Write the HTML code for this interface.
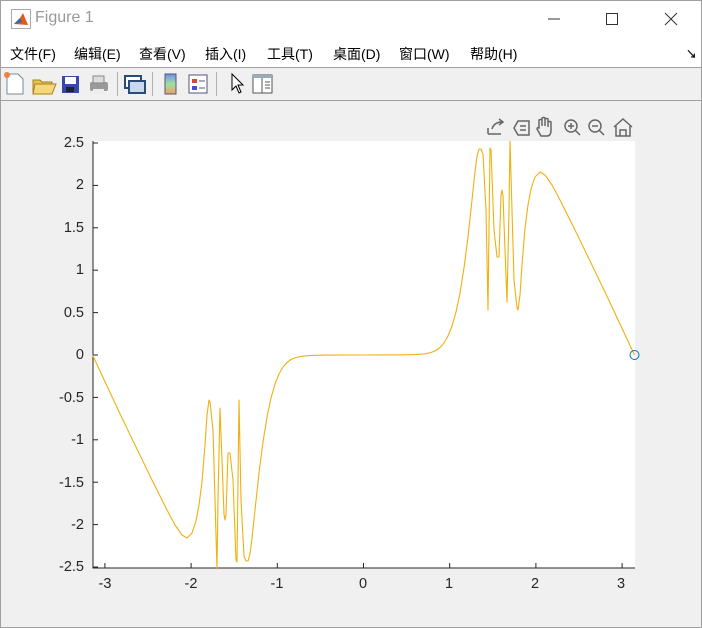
<!DOCTYPE html>
<html><head><meta charset="utf-8"><style>
body{margin:0;width:702px;height:628px;background:#f0f0f0;font-family:"Liberation Sans","Noto Sans CJK SC",sans-serif;overflow:hidden;position:relative}
.top{position:absolute;left:0;top:0;width:702px;height:67px;background:#fff;border-bottom:1px solid #a0a0a0}
.title{position:absolute;left:35px;top:9px;font-size:16px;color:#999}
.menu{position:absolute;top:44px;font-size:14px;color:#000}
.tb{position:absolute;top:100px;left:0;width:702px;height:1px;background:#a0a0a0}
.sep{position:absolute;top:72px;width:1px;height:24px;background:#b0b0b0}
.win{position:absolute;left:0;top:0;width:700px;height:626px;border:1px solid #a0a0a0;pointer-events:none}
.yl{position:absolute;right:618px;font-size:14.5px;color:#262626;text-align:right}
.xl{position:absolute;top:576px;font-size:14.5px;color:#262626;width:40px;text-align:center}
</style></head><body>
<div class="top">
<svg style="position:absolute;left:11px;top:9px" width="20" height="20"><rect x="0.5" y="0.5" width="19" height="19" fill="#fff" stroke="#aaa"/><path d="M3 15 L9 9 L12 4 L17 16 Z" fill="#e05a1a"/><path d="M3 15 L9 9 L11 13 Z" fill="#2a6ab8"/></svg>
<div class="title">Figure 1</div>
<svg style="position:absolute;left:545px;top:10px" width="140" height="20"><line x1="3" y1="9" x2="15" y2="9" stroke="#333"/><rect x="61.5" y="3.5" width="11" height="11" fill="none" stroke="#333"/><path d="M120 3 L132 15 M132 3 L120 15" stroke="#333"/></svg>
<div class="menu" style="left:10px">文件(F)</div>
<div class="menu" style="left:74px">编辑(E)</div>
<div class="menu" style="left:139px">查看(V)</div>
<div class="menu" style="left:205px">插入(I)</div>
<div class="menu" style="left:267px">工具(T)</div>
<div class="menu" style="left:333px">桌面(D)</div>
<div class="menu" style="left:399px">窗口(W)</div>
<div class="menu" style="left:470px">帮助(H)</div>
<div style="position:absolute;left:686px;top:46px;font-size:11px;font-weight:bold">↘</div>
</div>
<svg style="position:absolute;left:0;top:70px" width="280" height="28">
<path d="M7 4 H18 L23 9 V24 H7 Z" fill="#fff" stroke="#789"/><circle cx="7" cy="5" r="3" fill="#f08040"/>
<path d="M33 10 H40 L42 12 H52 V24 H33 Z" fill="#e8c050" stroke="#a88020"/><path d="M35 14 H56 L52 24 H33 Z" fill="#f5d878" stroke="#a88020"/>
<rect x="62" y="6" width="17" height="17" fill="#3848a8"/><rect x="65" y="7" width="11" height="7" fill="#fff"/><rect x="66" y="17" width="8" height="5" fill="#223"/>
<rect x="90" y="12" width="18" height="9" rx="2" fill="#999"/><rect x="93" y="6" width="11" height="7" fill="#ddd" stroke="#888"/><rect x="93" y="19" width="11" height="5" fill="#eee"/>
<rect x="125" y="6" width="16" height="12" fill="#fff" stroke="#2a4a7a" stroke-width="2"/><rect x="129" y="11" width="16" height="12" fill="#c8d8f0" stroke="#2a4a7a" stroke-width="2"/>
<defs><linearGradient id="g" x1="0" y1="0" x2="0" y2="1"><stop offset="0" stop-color="#7090f0"/><stop offset=".5" stop-color="#a0e0a0"/><stop offset="1" stop-color="#f0a060"/></linearGradient></defs>
<rect x="165" y="4" width="11" height="20" fill="url(#g)" stroke="#557"/>
<rect x="189" y="5" width="18" height="18" fill="#fff" stroke="#557"/><rect x="192" y="9" width="5" height="4" fill="#e04040"/><rect x="192" y="16" width="5" height="4" fill="#4050d0"/><path d="M199 11 H205 M199 18 H205" stroke="#557"/>
<path d="M232 4 L232 20 L236 16 L239 23 L241 22 L238 15 L243 15 Z" fill="#fff" stroke="#000"/>
<rect x="253" y="5" width="19" height="18" fill="#fff" stroke="#555"/><rect x="253" y="5" width="19" height="3" fill="#9ab"/><path d="M262 8 V23 M265 12 H270 M265 15 H270 M265 18 H270" stroke="#555"/>
</svg>
<div class="sep" style="left:117px"></div><div class="sep" style="left:152px"></div><div class="sep" style="left:216px"></div>
<div class="tb"></div>
<svg style="position:absolute;left:485px;top:115px" width="150" height="25" fill="none" stroke="#666" stroke-width="1.5">
<path d="M3 19 V13 M3 19 H16 M7 14 Q9 7 17 7 M14 4 L18 7 L14 10"/>
<path d="M33 6 H44 V20 H33 L29 13 Z M35 11 H41 M35 15 H41"/>
<path d="M56 21 L52 14 Q52 12 54 13 V5 Q56 4 57 5 V11 V3 Q59 2 60 3 V11 V4 Q62 3 63 4 V12 V7 Q65 6 66 7 V15 Q66 21 62 21 Z"/>
<circle cx="86" cy="11" r="6"/><path d="M90 15 L95 20 M83 11 H89 M86 8 V14"/>
<circle cx="110" cy="11" r="6"/><path d="M114 15 L119 20 M107 11 H113"/>
<path d="M129 12 L138 4 L147 12 M131 11 V21 H145 V11 M135 21 V15 H141 V21"/>
</svg>
<svg style="position:absolute;left:0;top:0" width="702" height="628">
<rect x="93" y="141" width="542" height="427" fill="#fff"/>
<path d="M93 141 V568 H635" fill="none" stroke="#262626"/>
<g stroke="#262626" id="ticks"></g>
<polyline id="c" fill="none" stroke="#f0b010" stroke-width="1.1" stroke-linejoin="round"/>
<circle cx="634.5" cy="355" r="4.5" fill="none" stroke="#0072bd"/>
</svg>
<div class="yl" style="top:135px">2.5</div><div class="yl" style="top:177px">2</div><div class="yl" style="top:220px">1.5</div><div class="yl" style="top:262px">1</div><div class="yl" style="top:305px">0.5</div><div class="yl" style="top:347px">0</div><div class="yl" style="top:390px">-0.5</div><div class="yl" style="top:432px">-1</div><div class="yl" style="top:475px">-1.5</div><div class="yl" style="top:517px">-2</div><div class="yl" style="top:559px">-2.5</div>
<div class="xl" style="left:85px">-3</div><div class="xl" style="left:171px">-2</div><div class="xl" style="left:257px">-1</div><div class="xl" style="left:343px">0</div><div class="xl" style="left:429px">1</div><div class="xl" style="left:515px">2</div><div class="xl" style="left:601px">3</div>
<div class="win"></div>
<script>
var r=[[363.5,355],[400,354.9],[415,354.6],[425,353.8],[431,352.5],[436,350.5],[440,347.5],[444,343],[448,336],[452,326],[456,312],[460,293],[464,268],[468,237],[472,200],[475,172],[477,156],[479,149],[481,149],[483,154],[486,210],[488,310],[490,148],[491,150],[494,230],[497,257],[499,257],[501,195],[502,190],[503,196],[505,250],[507,302],[509,210],[510,141],[511,175],[514,280],[517,308],[518,310],[520,295],[522,265],[525,228],[528,205],[531,189],[535,177],[540,172],[545,175],[552,185],[560,200],[575,230],[590,261],[605,292],[620,324],[634.5,355]];
var l=r.slice(1).reverse().map(function(p){return [727-p[0],710-p[1]]});
document.getElementById('c').setAttribute('points',l.concat(r).map(function(p){return p.join(',')}).join(' '));
var t='';for(var i=0;i<11;i++){var y=143+i*42.4;t+='<line x1="93" x2="98" y1="'+y+'" y2="'+y+'"/>';}
for(var j=-3;j<=3;j++){var x=363.5+j*86.2;t+='<line x1="'+x+'" x2="'+x+'" y1="568" y2="563"/>';}
document.getElementById('ticks').innerHTML=t;
</script>
</body></html>
